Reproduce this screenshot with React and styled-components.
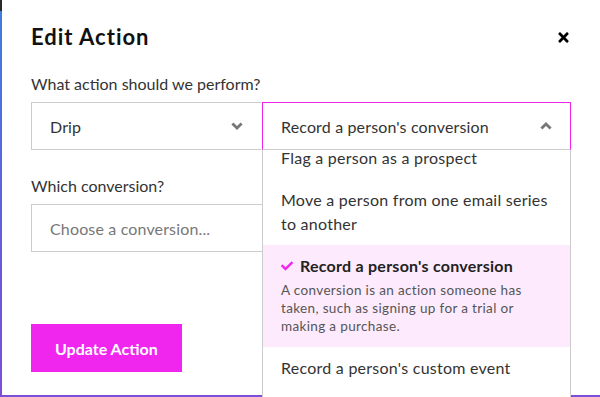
import React, { useRef, useEffect } from 'react';
import styled, { createGlobalStyle } from 'styled-components';
import { FaCheck, FaTimes } from 'react-icons/fa';

const GlobalStyle = createGlobalStyle`
  html, body {
    margin: 0;
    padding: 0;
    background: #fff;
  }
  body {
    font-family: Lato, 'Open Sans', sans-serif;
    color: #333;
  }
  * {
    box-sizing: border-box;
  }
`;

const Page = styled.div`
  width: 600px;
  height: 397px;
  overflow: hidden;
`;

const Modal = styled.div`
  position: relative;
  width: 600px;
  height: 397px;
  background: #fff;
  border-left: 2px solid;
  border-bottom: 2px solid;
  border-image: linear-gradient(to bottom, #2a2a2a 0, #2a2a2a 12px, #3f7ddc 12px, #6a58d8 70%, #7b4fd6 100%) 1;
  padding: 23px 29px 0;
`;

const Header = styled.div`
  display: flex;
  align-items: center;
  justify-content: space-between;
  margin-bottom: 21px;
`;

const Title = styled.h2`
  margin: 0;
  font-size: 22px;
  line-height: 28px;
  font-weight: 700;
  color: #111;
  letter-spacing: 1px;
`;

const CloseButton = styled.button`
  display: flex;
  padding: 0;
  border: none;
  background: none;
  color: #000;
  cursor: pointer;
`;

const Field = styled.div`
  margin-bottom: ${p => p.$gap || 0}px;
`;

const Label = styled.div`
  font-size: 16px;
  line-height: 24px;
  color: #333;
  margin-bottom: 6px;
`;

const SelectRow = styled.div`
  display: flex;
`;

const SelectWrap = styled.div`
  position: relative;
  flex: ${p => (p.$grow ? 1 : 'none')};
  width: ${p => (p.$grow ? 'auto' : '231px')};
`;

const Select = styled.div`
  height: 48px;
  display: flex;
  align-items: center;
  justify-content: space-between;
  padding: 0 18px;
  border: 1px solid ${p => (p.$open ? '#ee22ee' : '#ccc')};
  border-bottom-color: #ccc;
  border-right-color: ${p => (p.$open ? '#ee22ee' : 'transparent')};
  font-size: 16px;
  letter-spacing: 0.15px;
  color: #333;
  background: #fff;
`;

const Chevron = ({ up }) => (
  <svg width="12" height="8" viewBox="0 0 12 8" aria-hidden="true">
    <path
      d={up ? 'M1.4 6.6 L6 2 L10.6 6.6' : 'M1.4 1.4 L6 6 L10.6 1.4'}
      fill="none"
      stroke="#777"
      strokeWidth="2.8"
    />
  </svg>
);

const Menu = styled.div`
  position: absolute;
  top: 100%;
  left: 0;
  right: 0;
  height: 260px;
  overflow: hidden;
  background: #fff;
  border: 1px solid #ccc;
  border-top: none;
  z-index: 2;
`;

const Option = styled.div`
  padding: ${p => (p.$selected ? '9px 18px 12px' : '9px 18px')};
  font-size: 16px;
  line-height: 24px;
  letter-spacing: 0.25px;
  color: #333;
  background: ${p => (p.$selected ? '#fdebfd' : '#fff')};
`;

const OptionTitle = styled.div`
  display: flex;
  align-items: center;
  gap: 7px;
  font-weight: 700;
  color: #222;

  svg {
    color: #f026ef;
  }
`;

const OptionDesc = styled.div`
  margin-top: 3px;
  font-size: 13.5px;
  line-height: 18px;
  letter-spacing: 0.35px;
  color: #555;
`;

const Input = styled.input`
  display: block;
  width: 100%;
  height: 48px;
  padding: 0 18px;
  border: 1px solid #ccc;
  font-family: inherit;
  font-size: 16px;
  letter-spacing: 0.15px;
  color: #333;
  outline: none;

  &::placeholder {
    color: #777;
  }
`;

const SubmitButton = styled.button`
  margin-top: 72px;
  height: 48px;
  padding: 0 24px;
  border: none;
  background: #f026ef;
  color: #fff;
  font-family: inherit;
  font-size: 16px;
  font-weight: 700;
  cursor: pointer;
`;

const actions = [
  { label: 'Apply a tag to a person' },
  { label: 'Flag a person as a prospect' },
  { label: 'Move a person from one email series to another' },
  {
    label: "Record a person's conversion",
    desc: 'A conversion is an action someone has taken, such as signing up for a trial or making a purchase.',
    selected: true,
  },
  { label: "Record a person's custom event" },
  { label: 'Remove a tag from a person' },
];

export default function App() {
  const menuRef = useRef(null);

  useEffect(() => {
    if (menuRef.current) menuRef.current.scrollTop = 55;
  }, []);

  return (
    <Page>
      <GlobalStyle />
      <Modal>
        <Header>
          <Title>Edit Action</Title>
          <CloseButton aria-label="Close">
            <FaTimes size={15} />
          </CloseButton>
        </Header>

        <Field $gap={24}>
          <Label>What action should we perform?</Label>
          <SelectRow>
            <SelectWrap>
              <Select>
                Drip
                <Chevron />
              </Select>
            </SelectWrap>
            <SelectWrap $grow>
              <Select $open>
                Record a person's conversion
                <Chevron up />
              </Select>
              <Menu ref={menuRef}>
                {actions.map(a => (
                  <Option key={a.label} $selected={a.selected}>
                    {a.selected ? (
                      <>
                        <OptionTitle>
                          <FaCheck size={12} />
                          {a.label}
                        </OptionTitle>
                        <OptionDesc>{a.desc}</OptionDesc>
                      </>
                    ) : (
                      a.label
                    )}
                  </Option>
                ))}
              </Menu>
            </SelectWrap>
          </SelectRow>
        </Field>

        <Field>
          <Label>Which conversion?</Label>
          <Input readOnly placeholder="Choose a conversion..." />
        </Field>

        <SubmitButton>Update Action</SubmitButton>
      </Modal>
    </Page>
  );
}
